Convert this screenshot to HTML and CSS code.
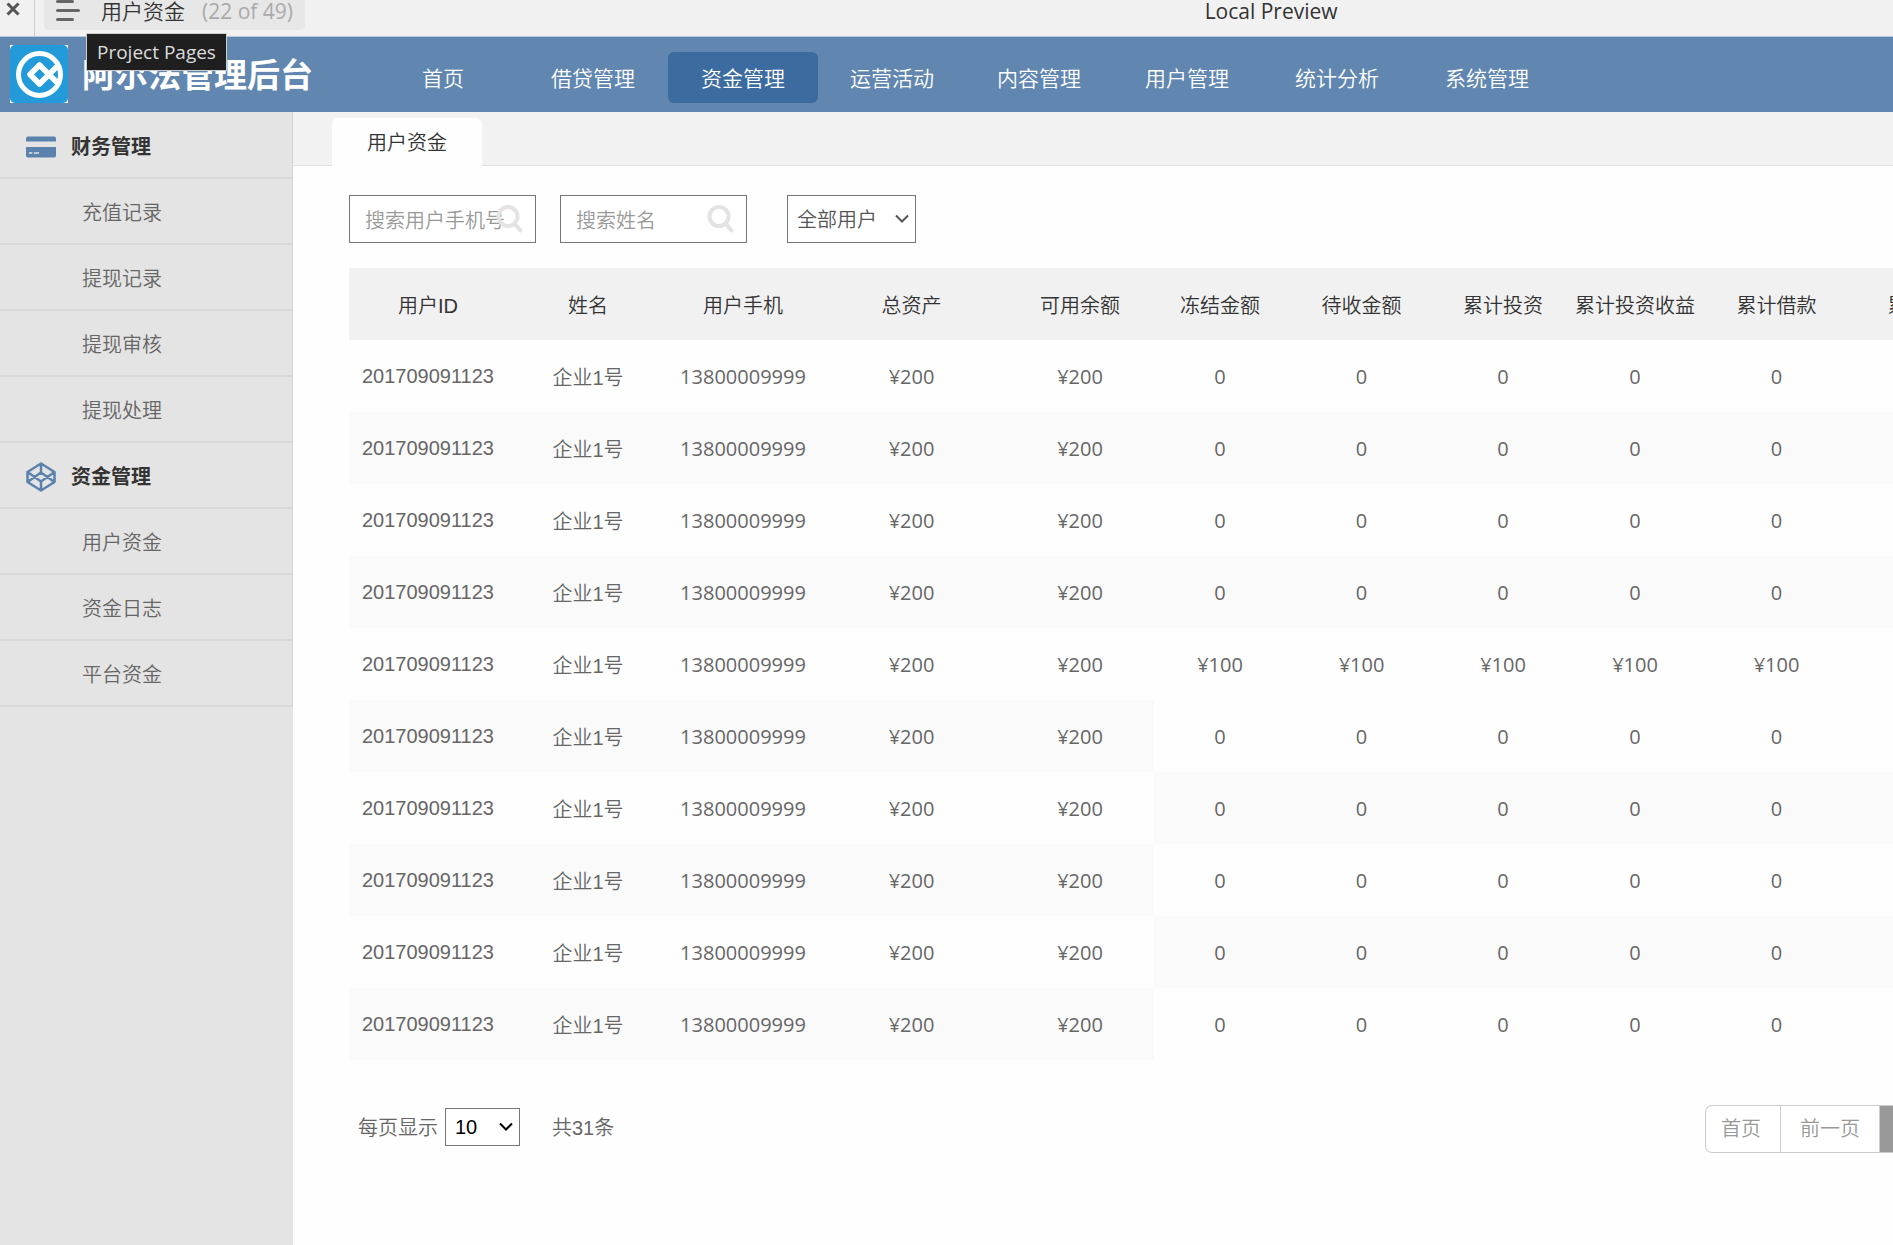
FILE: index.html
```html
<!DOCTYPE html>
<html lang="zh-CN">
<head>
<meta charset="utf-8">
<title>用户资金</title>
<link rel="stylesheet" href="styles.css">
</head>
<body>
<div class="preview-bar">
  <div class="preview-tools">
    <button class="close-button" type="button" aria-label="Close">
      <svg width="14" height="14" viewBox="0 0 14 14"><path d="M1.500 1.500l11 11M12.500 1.500l-11 11" stroke="#555" stroke-width="3"/></svg>
    </button>
    <button class="pages-button" type="button">
      <svg width="24" height="22" viewBox="0 0 24 22"><path d="M1.500 1.500h15M1.500 10.500h21M1.500 19.500h15" stroke="#666" stroke-width="3" stroke-linecap="round"/></svg>
      <span class="page-name">用户资金</span>
      <span class="page-count">(22 of 49)</span>
    </button>
    <div class="tooltip" role="tooltip">Project Pages</div>
  </div>
  <div class="preview-title">Local Preview</div>
</div>

<header class="header">
  <div class="brand">
    <svg class="logo" width="58" height="58" viewBox="0 0 58 58">
      <rect width="58" height="58" fill="#fff"/>
      <rect width="58" height="58" rx="5" fill="#239ada"/>
      <circle cx="29.500" cy="29.500" r="21" fill="none" stroke="#fff" stroke-width="5"/>
      <path d="M47 37.500L29.500 20 20 29.500 29.500 39 47 21.500" fill="none" stroke="#fff" stroke-width="5.500" stroke-linejoin="round"/>
    </svg>
    <h1 class="brand-name">阿尔法管理后台</h1>
  </div>
  <nav class="nav">
    <a href="#">首页</a>
    <a href="#">借贷管理</a>
    <a href="#" class="active">资金管理</a>
    <a href="#">运营活动</a>
    <a href="#">内容管理</a>
    <a href="#">用户管理</a>
    <a href="#">统计分析</a>
    <a href="#">系统管理</a>
  </nav>
</header>

<div class="layout">
  <aside class="sidebar">
    <ul class="menu">
      <li class="menu-group">
        <svg width="30" height="30" viewBox="0 0 30 30"><path d="M2 4.500h26a2 2 0 0 1 2 2v3H0v-3a2 2 0 0 1 2-2zM0 15h30v8.500a2 2 0 0 1-2 2H2a2 2 0 0 1-2-2z" fill="#5b82ac"/><path d="M3 21h3.500M8 21h5" stroke="#e4e4e4" stroke-width="1.500"/></svg>
        财务管理
      </li>
      <li><a href="#">充值记录</a></li>
      <li><a href="#">提现记录</a></li>
      <li><a href="#">提现审核</a></li>
      <li><a href="#">提现处理</a></li>
      <li class="menu-group">
        <svg width="30" height="30" viewBox="0 0 30 30"><path d="M15 1.500L28.500 10v10L15 28.500 1.500 20V10zM1.500 10L15 19.500 28.500 10M1.500 20L15 10.500 28.500 20M15 1.500v9M15 19.500v9" fill="none" stroke="#5b82ac" stroke-width="2.500" stroke-linejoin="round"/></svg>
        资金管理
      </li>
      <li><a href="#">用户资金</a></li>
      <li><a href="#">资金日志</a></li>
      <li><a href="#">平台资金</a></li>
    </ul>
  </aside>

  <main class="main">
    <div class="tabs"><a href="#" class="tab">用户资金</a></div>
    <div class="content">
      <form class="filters">
        <div class="search">
          <input type="text" placeholder="搜索用户手机号" aria-label="搜索用户手机号">
          <svg width="27" height="28" viewBox="0 0 27 28"><circle cx="12" cy="11.500" r="9.500" fill="none" stroke="#e3e3e3" stroke-width="4"/><path d="M18.500 18.500l6 7" stroke="#e3e3e3" stroke-width="4" stroke-linecap="round"/></svg>
        </div>
        <div class="search">
          <input type="text" placeholder="搜索姓名" aria-label="搜索姓名">
          <svg width="27" height="28" viewBox="0 0 27 28"><circle cx="12" cy="11.500" r="9.500" fill="none" stroke="#e3e3e3" stroke-width="4"/><path d="M18.500 18.500l6 7" stroke="#e3e3e3" stroke-width="4" stroke-linecap="round"/></svg>
        </div>
        <div class="select user-type">
          <select aria-label="用户类型"><option>全部用户</option></select>
          <svg width="14" height="10" viewBox="0 0 14 10"><path d="M1 1.500l6 6 6-6" fill="none" stroke="#555" stroke-width="2"/></svg>
        </div>
      </form>

      <table class="funds">
        <colgroup>
          <col class="w-id"><col class="w-name"><col class="w-phone"><col class="w-total"><col class="w-phone">
          <col class="w-narrow"><col class="w-wide"><col class="w-narrow"><col class="w-narrow"><col class="w-wide"><col class="w-wide">
        </colgroup>
        <thead>
          <tr><th>用户ID</th><th>姓名</th><th>用户手机</th><th>总资产</th><th>可用余额</th><th>冻结金额</th><th>待收金额</th><th>累计投资</th><th>累计投资收益</th><th>累计借款</th><th>累计还款</th></tr>
        </thead>
        <tbody>
          <tr><td>201709091123</td><td>企业1号</td><td>13800009999</td><td>¥200</td><td>¥200</td><td>0</td><td>0</td><td>0</td><td>0</td><td>0</td><td></td></tr>
          <tr><td>201709091123</td><td>企业1号</td><td>13800009999</td><td>¥200</td><td>¥200</td><td>0</td><td>0</td><td>0</td><td>0</td><td>0</td><td></td></tr>
          <tr><td>201709091123</td><td>企业1号</td><td>13800009999</td><td>¥200</td><td>¥200</td><td>0</td><td>0</td><td>0</td><td>0</td><td>0</td><td></td></tr>
          <tr><td>201709091123</td><td>企业1号</td><td>13800009999</td><td>¥200</td><td>¥200</td><td>0</td><td>0</td><td>0</td><td>0</td><td>0</td><td></td></tr>
          <tr><td>201709091123</td><td>企业1号</td><td>13800009999</td><td>¥200</td><td>¥200</td><td>¥100</td><td>¥100</td><td>¥100</td><td>¥100</td><td>¥100</td><td></td></tr>
          <tr><td>201709091123</td><td>企业1号</td><td>13800009999</td><td>¥200</td><td>¥200</td><td>0</td><td>0</td><td>0</td><td>0</td><td>0</td><td></td></tr>
          <tr><td>201709091123</td><td>企业1号</td><td>13800009999</td><td>¥200</td><td>¥200</td><td>0</td><td>0</td><td>0</td><td>0</td><td>0</td><td></td></tr>
          <tr><td>201709091123</td><td>企业1号</td><td>13800009999</td><td>¥200</td><td>¥200</td><td>0</td><td>0</td><td>0</td><td>0</td><td>0</td><td></td></tr>
          <tr><td>201709091123</td><td>企业1号</td><td>13800009999</td><td>¥200</td><td>¥200</td><td>0</td><td>0</td><td>0</td><td>0</td><td>0</td><td></td></tr>
          <tr><td>201709091123</td><td>企业1号</td><td>13800009999</td><td>¥200</td><td>¥200</td><td>0</td><td>0</td><td>0</td><td>0</td><td>0</td><td></td></tr>
        </tbody>
      </table>

      <div class="pager">
        <div class="page-info">
          <label for="page-size">每页显示</label>
          <div class="select page-size">
            <select id="page-size"><option>10</option></select>
            <svg width="14" height="10" viewBox="0 0 14 10"><path d="M1 1.500l6 6 6-6" fill="none" stroke="#000" stroke-width="2"/></svg>
          </div>
          <span class="total">共31条</span>
        </div>
        <div class="pages">
          <button type="button">首页</button>
          <button type="button">前一页</button>
          <button type="button" class="current">1</button>
        </div>
      </div>
    </div>
  </main>
</div>
</body>
</html>
```
FILE: styles.css
```css
* {
  box-sizing: border-box;
}

body {
  margin: 0;
  min-height: 100vh;
  display: flex;
  flex-direction: column;
  overflow: hidden;
  background: #fefefe;
  color: #666;
  font: 350 20px/30px "Open Sans", "Noto Sans CJK SC", sans-serif;
}

a {
  color: inherit;
  text-decoration: none;
}

button,
input,
select {
  font: inherit;
  color: inherit;
}

svg {
  display: block;
  flex: none;
}

/* Preview bar */
.preview-bar {
  display: grid;
  grid-template-columns: 7fr 4fr;
  height: 37px;
  background: #f1f1f1;
  border-bottom: 1px solid #b8cbdc;
  color: #333;
  font-size: 21px;
  font-weight: 400;
}

.preview-tools {
  position: relative;
  display: flex;
  align-items: flex-start;
}

.close-button {
  width: 35px;
  height: 36px;
  padding: 2px 0 0 6px;
  display: flex;
  border: 0;
  border-right: 1px solid #ccc;
  background: none;
}

.pages-button {
  display: flex;
  height: 30px;
  margin-left: 9px;
  padding: 0 12px;
  border: 0;
  border-radius: 0 0 5px 5px;
  background: #e7e7e7;
  line-height: 22px;
}

.page-name {
  margin-left: 21px;
  font-weight: 350;
}

.page-count {
  margin-left: 17px;
  color: #aaa;
}

.tooltip {
  position: absolute;
  z-index: 2;
  top: 33px;
  left: 86px;
  padding: 3px 10px;
  border: 1px solid #ccc;
  background: #1f1f1f;
  color: #ddd;
  font-size: 19px;
}

.preview-title {
  line-height: 23px;
}

/* Header */
.header {
  display: flex;
  height: 75px;
  background: #6187b0;
  color: #fff;
}

.brand {
  display: flex;
  flex: none;
  align-items: center;
  gap: 14px;
  width: 368px;
  padding: 0 0 1px 10px;
}

.brand-name {
  margin: 2px 0 0;
  font-size: 33px;
  font-weight: 700;
  line-height: 40px;
}

.nav {
  display: grid;
  grid-template-columns: repeat(3, 150px) 148px 146px repeat(3, 150px);
  padding: 15px 0 9px;
}

.nav a {
  padding-top: 1px;
  border-radius: 6px;
  font-size: 21px;
  line-height: 50px;
  text-align: center;
}

.nav .active {
  background: #3c6c9f;
}

/* Sidebar */
.layout {
  display: flex;
  flex: 1;
}

.sidebar {
  flex: none;
  width: 293px;
  background: #e4e4e4;
}

.menu {
  margin: 0;
  padding: 1px 0 0;
  list-style: none;
  border-right: 1px solid #d3d3d3;
}

.menu li {
  display: flex;
  align-items: center;
  height: 66px;
  padding: 3px 0 0 82px;
  border-bottom: 2px solid #d8d8d8;
}

.menu .menu-group {
  gap: 15px;
  padding-left: 26px;
  color: #333;
  font-weight: 700;
}

/* Content */
.main {
  flex: 1;
  min-width: 0;
  overflow: hidden;
}

.tabs {
  height: 54px;
  padding: 6px 0 0 39px;
  border-bottom: 1px solid #dfdfdf;
  background: #f2f2f2;
}

.tab {
  display: block;
  width: 150px;
  height: 48px;
  border-radius: 6px 6px 0 0;
  background: #fefefe;
  color: #333;
  line-height: 50px;
  text-align: center;
}

.content {
  padding: 29px 0 0 56px;
}

.filters {
  display: flex;
  gap: 24px;
}

.search,
.select {
  position: relative;
}

.search input {
  width: 187px;
  height: 48px;
  padding: 2px 15px 0;
  border: 1px solid #767676;
  background: #fff;
}

.search input::placeholder {
  color: #999;
}

.search svg {
  position: absolute;
  top: 10px;
  right: 13px;
}

.select select {
  width: 100%;
  height: 100%;
  padding: 0 9px;
  border: 1px solid #767676;
  border-radius: 0;
  background: #fff;
  appearance: none;
}

.select svg {
  position: absolute;
  top: 50%;
  right: 7px;
  margin-top: -5px;
  pointer-events: none;
}

.user-type {
  width: 129px;
  height: 48px;
  margin-left: 16px;
  color: #555;
}

.user-type select {
  padding-top: 2px;
}

/* Funds table */
.funds {
  width: 1653px;
  margin-top: 25px;
  border-collapse: collapse;
  table-layout: fixed;
}

.w-id {
  width: 158px;
}

.w-name {
  width: 162px;
}

.w-phone {
  width: 148px;
}

.w-total {
  width: 189px;
}

.w-narrow {
  width: 132px;
}

.w-wide {
  width: 151px;
}

.funds th,
.funds td {
  height: 72px;
  padding: 1px 0 0;
  text-align: center;
}

.funds th {
  padding-top: 3px;
  background: #f1f1f1;
  color: #333;
  font-family: "Liberation Sans", "Noto Sans CJK SC", sans-serif;
  font-weight: 350;
}

.funds td {
  font-weight: 400;
}

.funds td:nth-child(2) {
  padding-top: 3px;
  font-family: "Liberation Sans", "Noto Sans CJK SC", sans-serif;
  font-weight: 350;
}

.funds td:first-child {
  padding-top: 0;
  font-family: "Liberation Sans", sans-serif;
}

/* The wide columns restart their striping after the fifth row. */
.funds tbody tr:nth-child(even) td:nth-child(-n+5),
.funds tbody tr:nth-child(2) td,
.funds tbody tr:nth-child(4) td,
.funds tbody tr:nth-child(7) td:nth-child(n+6),
.funds tbody tr:nth-child(9) td:nth-child(n+6) {
  background: #fafafa;
}

/* Pager */
.pager {
  display: flex;
  margin-top: 45px;
  padding-left: 9px;
}

.page-info {
  display: flex;
  align-items: center;
  height: 44px;
}

.page-info label,
.total {
  padding-top: 2px;
}

.page-size {
  width: 75px;
  height: 38px;
  margin: 0 32px 0 7px;
  color: #000;
  font-family: "Liberation Sans", sans-serif;
}

.total {
  font-family: "Liberation Sans", "Noto Sans CJK SC", sans-serif;
}

.pages {
  display: flex;
  margin: 0 -34px 0 auto;
  color: #999;
}

.pages button {
  height: 48px;
  padding: 0 19px;
  border: 1px solid #ccc;
  border-right: 0;
  background: #fff;
}

.pages button:first-child {
  padding: 0 19px 0 15px;
  border-radius: 7px 0 0 7px;
}

.pages .current {
  width: 48px;
  background: #999;
  color: #fff;
}
```
